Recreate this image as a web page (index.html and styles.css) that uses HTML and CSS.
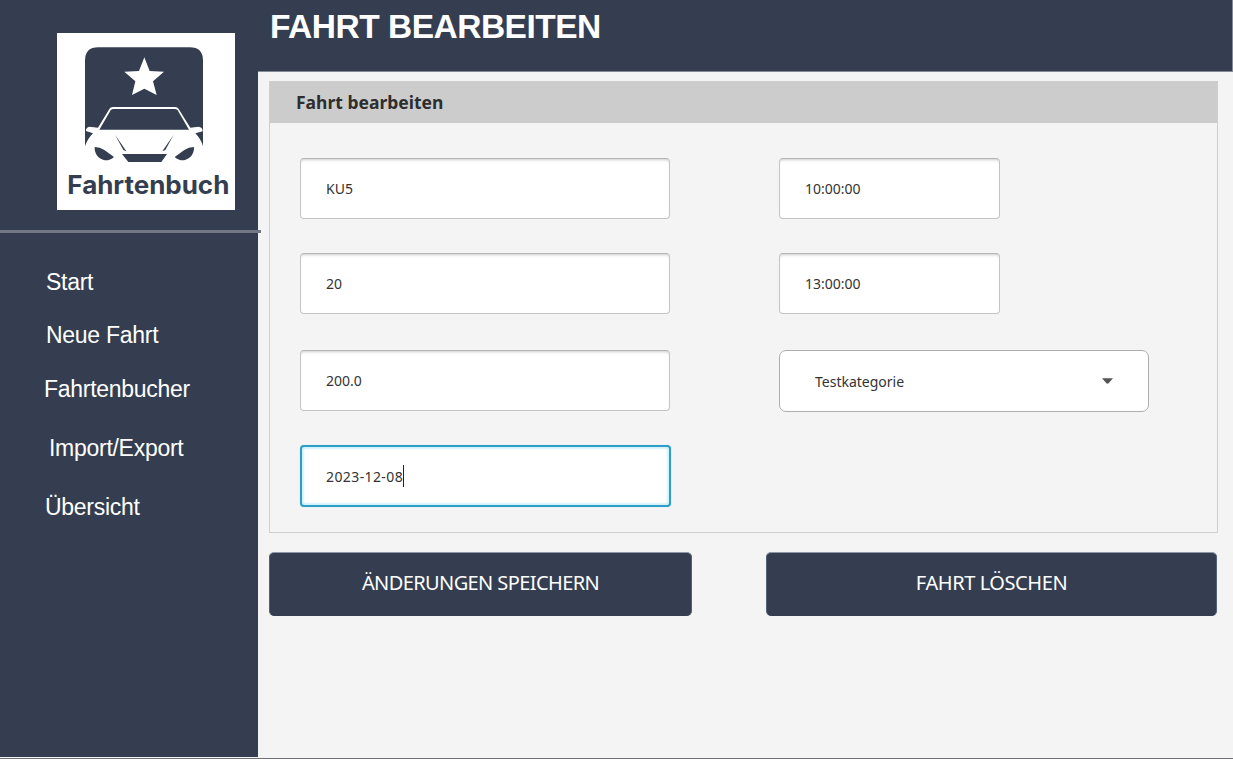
FILE: index.html
```html
<!DOCTYPE html>
<html lang="de">
<head>
<meta charset="utf-8">
<title>Fahrtenbuch</title>
<link rel="stylesheet" href="styles.css">
</head>
<body>
<div class="app">
  <aside class="sidebar">
    <div class="brand">
      <svg class="logo" viewBox="21 24 534 531" role="img" aria-label="Fahrtenbuch">
        <rect x="21" y="24" width="534" height="531" fill="#fff"/>
        <path fill="#343e50" d="M105 364V107Q105 67 145 67H419Q459 67 459 107V364Q453 342 436 325L458 319Q458 306 445 305L421 308L386 252Q383 246 375 246H189Q181 246 178 252L144 308L119 305Q107 307 108 318L129 325Q112 342 105 364Z"/>
        <path fill="#343e50" d="M148 314L182 256Q185 252 191 252H374Q380 252 383 256L417 314Z"/>
        <path fill="#fff" d="M283 97L299 138L342 140L309 169L320 210L283 191L246 210L256 169L223 140L267 138Z"/>
        <path fill="#343e50" d="M134 366Q150 366 163 375L192 396Q180 407 164 406C145 401 133 387 134 366ZM432 366Q416 366 403 375L374 396Q386 407 402 406C421 401 433 387 432 366ZM216 387H351L334 411H235ZM195 329L229 379L220 375ZM371 329L337 379L346 375Z"/>
        <text class="logo-text" x="52" y="506" textLength="486" lengthAdjust="spacingAndGlyphs">Fahrtenbuch</text>
      </svg>
    </div>
    <hr class="rule">
    <nav class="nav">
      <a class="nav-start">Start</a>
      <a class="nav-new">Neue Fahrt</a>
      <a class="nav-books">Fahrtenbucher</a>
      <a class="nav-io">Import/Export</a>
      <a class="nav-overview">Übersicht</a>
    </nav>
  </aside>
  <main class="main">
    <header class="topbar"><h1>FAHRT BEARBEITEN</h1></header>
    <section class="panel">
      <h2>Fahrt bearbeiten</h2>
      <div class="fields">
        <div class="field">KU5</div>
        <div class="field short">10:00:00</div>
        <div class="field">20</div>
        <div class="field short">13:00:00</div>
        <div class="field">200.0</div>
        <div class="field select"><span>Testkategorie</span><svg class="arrow" viewBox="0 0 10 5"><path d="M0 0H10L6 4.5Q5 5.3 4 4.5Z" fill="#555"/></svg></div>
        <div class="field focused">2023-12-08<span class="caret"></span></div>
      </div>
    </section>
    <div class="actions">
      <button class="save">ÄNDERUNGEN SPEICHERN</button>
      <button class="delete">FAHRT LÖSCHEN</button>
    </div>
  </main>
</div>
</body>
</html>
```
FILE: styles.css
```css
* { box-sizing: border-box; }
body { margin: 0; background: #f4f4f4; }
.app { display: flex; width: 1233px; height: 759px; overflow: hidden; border-bottom: 1px solid #706f73; }
.sidebar { width: 258px; height: 757px; flex: none; background: #343e50; font-family: "Liberation Sans", Arial, sans-serif; }
.brand { height: 230px; padding: 33px 0 0 57px; }
.logo { display: block; width: 178px; height: 177px; }
.logo-text { font: 700 76px Inter, sans-serif; fill: #343e50; }
.rule { width: 261px; height: 3px; margin: 0; border: 0; background: #737887; }
.nav { display: flex; flex-direction: column; padding: 36px 0 0 46px; color: #fff; font-size: 23px; line-height: 26px; letter-spacing: -0.28px; }
.nav-new { margin-top: 27px; }
.nav-books { margin: 28px 0 0 -2px; }
.nav-io { margin: 33px 0 0 3px; }
.nav-overview { margin: 33px 0 0 -1px; }
.main { flex: 1; font-family: "Noto Sans", sans-serif; }
.topbar { height: 72px; padding: 8px 0 0 12px; background: #343e50; border-bottom: 1px solid #858a97; border-right: 1px solid #858a97; }
h1 { margin: 0; color: #fff; font: bold 33.5px/38px "Liberation Sans", Arial, sans-serif; letter-spacing: -0.5px; }
.panel { width: 949px; height: 452px; margin: 9px 0 0 11px; border: 1px solid #cfcfcf; }
h2 { height: 41px; margin: 0; padding-left: 26px; background: #ccc; color: #2e2e2e; font-size: 17.5px; line-height: 41px; }
.fields { display: grid; grid-template-columns: 370px 370px; grid-template-rows: 61px 63px 61px 62px; align-items: start; column-gap: 109px; row-gap: 34px; padding: 35px 0 0 30px; }
.field { display: flex; align-items: center; width: 370px; height: 61px; padding: 0 0 1px 25px; border: 1px solid #c4c4c4; border-top-color: #b5b5b5; border-radius: 4px; background: #fff; box-shadow: inset 0 3px 3px -2px #ccc; color: #333; font-size: 14px; }
.short { width: 221px; }
.select { height: 62px; justify-content: space-between; padding: 0 35px; border-color: #adadad; border-radius: 7px; box-shadow: none; }
.arrow { width: 11px; height: 6px; }
.focused { width: 371px; height: 62px; border: 2px solid #2b9fc6; padding: 0 0 0 24px; box-shadow: inset 0 0 2px 2px #d3f1fb, 0 0 1px #80d5ef; letter-spacing: 0.4px; }
.caret { width: 1px; height: 22px; margin-left: -0.5px; background: #222; }
.actions { display: flex; gap: 74px; margin: 19px 0 0 11px; }
button { height: 64px; padding: 0 0 3px; border: 1px solid #a8b1ba; border-color: #8d99a8 #566273 #343e50; border-radius: 5px; background: #343e50; color: #fff; font: 20px "Noto Sans", sans-serif; letter-spacing: -0.6px; }
.save { width: 423px; }
.delete { width: 451px; letter-spacing: -0.42px; }
```
